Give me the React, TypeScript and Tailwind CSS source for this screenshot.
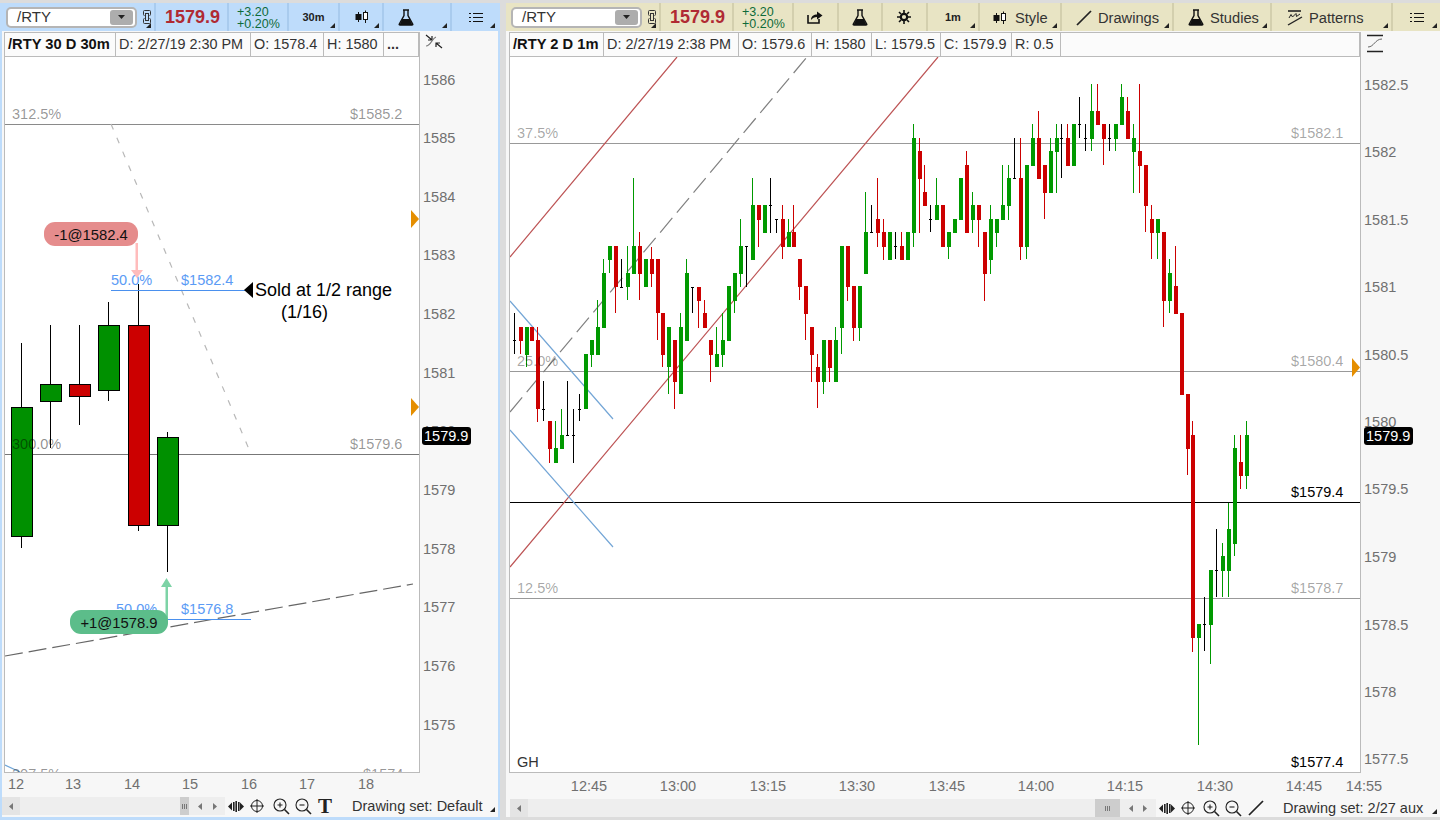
import React from "react";

type C = [string, number, number, number, number];
// type, wick top, wick bottom, body top (or tick), body bottom
const right: C[] = [
["k",313,354,340,340],["r",327,354,327,341],["g",327,367,327,355],["r",327,341,327,341],["r",327,422,340,409],
["k",381,421,409,409],["r",421,463,421,449],["g",421,463,448,463],["g",409,449,435,449],["k",381,435,435,435],
["k",409,463,435,435],["k",394,421,409,409],["g",354,409,354,409],["g",340,367,340,355],["g",300,355,327,355],
["g",259,328,273,328],["g",246,273,246,260],["r",246,313,246,287],["k",259,287,287,287],["g",246,300,273,287],
["g",178,274,246,274],["r",232,300,246,274],["g",259,287,259,287],["r",247,287,259,274],["r",259,340,259,313],
["r",313,367,313,355],["g",327,394,327,367],["r",340,409,340,382],["g",313,394,327,394],["g",259,341,273,341],
["k",287,313,287,287],["r",287,328,287,301],["r",300,328,313,328],["r",340,382,340,355],["g",327,367,354,367],
["g",313,367,340,355],["g",286,341,286,341],["g",273,313,273,301],["g",219,287,246,274],["k",246,287,246,246],
["g",178,260,205,260],["r",205,247,205,220],["g",205,233,205,233],["k",178,233,205,205],["k",219,233,219,219],
["r",205,259,219,247],["g",219,247,232,247],["r",205,247,232,247],["r",259,300,259,287],["r",286,340,286,314],
["r",327,382,327,355],["r",354,408,367,382],["g",340,394,340,382],["r",340,382,340,368],["g",327,382,340,382],
["g",246,354,246,328],["r",246,301,246,287],["r",286,341,286,328],["g",286,341,286,328],["g",192,274,232,274],
["k",205,232,232,232],["r",178,247,219,233],["r",219,260,232,247],["g",232,260,232,260],["k",232,259,246,246],
["r",232,260,246,260],["g",232,260,232,260],["g",124,247,138,233],["r",138,233,151,179],["r",165,206,192,206],
["k",205,232,219,219],["g",178,220,205,220],["r",205,247,205,247],["g",232,259,232,247],["g",219,233,219,233],
["g",178,220,178,220],["r",151,233,165,233],["g",192,233,205,220],["r",205,247,205,220],["r",232,301,232,274],
["g",205,274,219,260],["g",219,247,219,233],["g",165,220,205,220],["g",165,220,178,206],["k",138,178,178,178],
["r",138,260,178,247],["g",165,259,165,247],["g",124,166,138,166],["r",111,179,138,179],["r",165,219,165,193],
["g",138,193,151,193],["g",124,193,138,152],["k",124,178,138,138],["r",124,166,138,166],["g",124,166,124,166],
["k",97,138,124,124],["k",124,151,138,138],["g",84,151,111,139],["r",84,125,111,125],["r",124,165,124,139],
["k",124,151,138,138],["g",124,151,124,139],["g",84,125,97,125],["r",97,139,111,139],["g",124,193,138,152],
["r",84,193,151,166],["r",165,232,165,206],["r",205,259,219,233],["g",219,259,219,233],["r",232,327,232,301],
["g",259,313,273,301],["r",246,314,286,314],["r",313,395,313,395],["r",394,475,394,449],["r",421,652,435,638],
["g",624,745,624,638],["k",597,651,624,624],["g",570,664,570,625],["k",529,597,570,570],["g",543,597,556,571],
["g",503,597,529,571],["g",435,556,448,544],["r",435,489,462,476],["g",421,489,435,476],
];

const leftC = [
  { x: 11, c: "#009000", wt: 343, wb: 548, t: 407, b: 536 },
  { x: 40, c: "#009000", wt: 325, wb: 448, t: 384, b: 401 },
  { x: 69, c: "#cc0000", wt: 325, wb: 425, t: 384, b: 396 },
  { x: 98, c: "#009000", wt: 302, wb: 401, t: 325, b: 390 },
  { x: 128, c: "#cc0000", wt: 284, wb: 531, t: 325, b: 525 },
  { x: 157, c: "#009000", wt: 432, wb: 572, t: 437, b: 525 },
];

const Tri = () => (
  <svg width="5" height="5" viewBox="0 0 5 5" className="absolute right-[3px] bottom-[3px]">
    <path d="M5 0V5H0Z" fill="#222" />
  </svg>
);

const CandleIcon = () => (
  <svg width="14" height="14" viewBox="0 0 14 14" fill="none" stroke="#111" strokeWidth="1">
    <path d="M3.5 2V12M10.5 0.5V13" />
    <rect x="1" y="4.5" width="5" height="5" fill="#111" />
    <rect x="8.5" y="2.5" width="4" height="7" fill="#fff" />
  </svg>
);
const Flask = () => (
  <svg width="16" height="17" viewBox="0 0 16 17" fill="none">
    <path d="M5 1H11M6 1V6.5L1.2 15.2Q1 16 2 16H14Q15 16 14.8 15.2L10 6.5V1" stroke="#111" strokeWidth="1.4" />
    <path d="M4.2 10H11.8L14.5 16H1.5Z" fill="#111" />
  </svg>
);
const ListIcon = () => (
  <svg width="14" height="11" viewBox="0 0 14 11" fill="none" stroke="#111" strokeWidth="1">
    <path d="M0 1.5H2M4 1.5H14M0 5.5H2M4 5.5H14M0 9.5H2M4 9.5H14" />
  </svg>
);
const LinkIcon = () => (
  <svg width="8" height="14" viewBox="0 0 8 14" fill="none" stroke="#333" strokeWidth="1">
    <path d="M1.5 5.5Q0.5 5.5 0.5 4.5V1.5Q0.5 0.5 1.5 0.5H6.5Q7.5 0.5 7.5 1.5V4.5Q7.5 5.5 6.5 5.5" />
    <path d="M1.5 8.5Q0.5 8.5 0.5 9.5V12.5Q0.5 13.5 1.5 13.5H6.5Q7.5 13.5 7.5 12.5V9.5Q7.5 8.5 6.5 8.5" />
    <rect x="2.5" y="3.5" width="3" height="7" />
  </svg>
);
const ShareIcon = () => (
  <svg width="16" height="14" viewBox="0 0 16 14" fill="none">
    <path d="M1 5V13H12V9" stroke="#111" strokeWidth="1.6" />
    <path d="M4 10C4 6 7 4.5 10 4.5V1.5L15.5 5.5L10 9.5V7C7.5 7 5.5 8 4 10Z" fill="#111" />
  </svg>
);
const Gear = () => (
  <svg width="14" height="14" viewBox="0 0 14 14" fill="none" stroke="#111">
    <circle cx="7" cy="7" r="3.2" strokeWidth="2.2" />
    <path d="M7 0V3M7 11V14M0 7H3M11 7H14M2 2L4 4M10 10L12 12M2 12L4 10M10 4L12 2" strokeWidth="1.6" />
  </svg>
);
const LineIcon = () => (
  <svg width="16" height="16" viewBox="0 0 16 16" fill="none">
    <path d="M1 15L15 1" stroke="#222" strokeWidth="1.7" />
  </svg>
);
const PatternsIcon = () => (
  <svg width="16" height="16" viewBox="0 0 16 16" fill="none" stroke="#222">
    <path d="M1 1H14" strokeWidth="1.6" />
    <path d="M2 8L4 4.5L5.5 7L9 3.5L9.5 6.5L13 4" strokeWidth="1" />
    <path d="M1 15L15 7" strokeWidth="1.4" />
  </svg>
);
const Fit = () => (
  <svg width="16" height="11" viewBox="0 0 16 11" fill="#222">
    <path d="M0 5.5L4 1.5V9.5ZM16 5.5L12 1.5V9.5Z" />
    <rect x="5" y="1" width="1.6" height="9" />
    <rect x="7.4" y="0" width="1.6" height="11" />
    <rect x="10" y="1" width="1.6" height="9" />
  </svg>
);
const Cross = () => (
  <svg width="14" height="14" viewBox="0 0 14 14" fill="none" stroke="#222" strokeWidth="1">
    <circle cx="7" cy="7" r="5.5" />
    <path d="M7 0V14M0 7H14" />
  </svg>
);
const Zoom = ({ plus }: { plus?: boolean }) => (
  <svg width="17" height="17" viewBox="0 0 17 17" fill="none" stroke="#222" strokeWidth="1.1">
    <circle cx="7" cy="7" r="6" />
    <path d="M11.5 11.5L16 16" strokeWidth="1.6" />
    <path d={plus ? "M4.5 7H9.5M7 4.5V9.5" : "M4.5 7H9.5"} />
  </svg>
);
const Arrow = ({ dir, c = "#777" }: { dir: "l" | "r"; c?: string }) => (
  <svg width="4" height="7" viewBox="0 0 4 7">
    <path d={dir === "l" ? "M4 0V7L0 3.5Z" : "M0 0V7L4 3.5Z"} fill={c} />
  </svg>
);

const Combo = () => (
  <div className="flex items-center justify-between w-[131px] h-[21px] bg-white border-2 border-[#b5b5b5] rounded-[5px] pl-[9px] pr-[2px] text-[15px] text-[#333]">
    <span>/RTY</span>
    <span className="flex items-center justify-center w-[23px] h-[15px] rounded-[3px] bg-[#adadad]">
      <svg width="7" height="4" viewBox="0 0 7 4"><path d="M0 0H7L3.5 4Z" fill="#222" /></svg>
    </span>
  </div>
);

const Price = () => (
  <span className="font-bold text-[18px] text-[#b02a33]">1579.9</span>
);
const Change = () => (
  <div className="flex flex-col items-start pt-[2px] text-[12.5px] leading-[12px] text-[#0e6b3a]">
    <span>+3.20</span>
    <span>+0.20%</span>
  </div>
);

const Info = ({ items }: { items: { t: string; w: string; b?: boolean }[] }) => (
  <div className="flex h-[25px] border-t border-b border-[#bbbbbb] bg-[#fbfbfb] text-[14.4px] text-[#333]">
    {items.map((it) => (
      <div key={it.t} className={`${it.w} shrink-0 flex items-center pl-[3px] border-r border-[#bbbbbb] whitespace-nowrap ${it.b ? "font-bold text-[14.7px] text-[#111]" : ""}`}>
        {it.t}
      </div>
    ))}
  </div>
);

const Footer = ({ children }: { children: React.ReactNode }) => <div className="flex items-center h-[18px] text-[14.5px] text-[#333]">{children}</div>;

const AxisT = ({ x, y, t, anchor }: { x: number; y: number; t: string; anchor?: "start" | "middle" }) => (
  <text x={x} y={y} textAnchor={anchor || "start"} fontSize="14.5" fill="#707070">{t}</text>
);

const PriceTag = ({ x, y }: { x: number; y: number }) => (
  <g>
    <rect x={x} y={y} width="49" height="18" rx="3" fill="#000" />
    <text x={x + 2} y={y + 14} fontSize="14.5" fill="#fff">1579.9</text>
  </g>
);

function LeftPlot() {
  return (
    <svg width="414" height="715" viewBox="5 57 414 715" className="block bg-white">
      <path d="M5 124.5H419" stroke="#8a8a8a" />
      <path d="M5 454.5H419" stroke="#777" />
      <path d="M111 124L251 454" stroke="#b8b8b8" strokeWidth="1.2" strokeDasharray="6 9" />
      <path d="M5 656L413 584" stroke="#666" strokeWidth="1.2" strokeDasharray="18 6" />
      <path d="M5 765L20 772" stroke="#6fa5d8" strokeWidth="1.2" />
      {leftC.map((c) => (
        <g key={c.x} shapeRendering="crispEdges">
          <rect x={c.x + 10} y={c.wt} width="1" height={c.wb - c.wt} fill="#000" />
          <rect x={c.x + 0.5} y={c.t + 0.5} width="21" height={c.b - c.t} fill={c.c} stroke="#000" />
        </g>
      ))}
      <g fontSize="14.5">
        <text x="12" y="119" fill="#000" fillOpacity="0.42">312.5%</text>
        <text x="350" y="119" fill="#000" fillOpacity="0.42">$1585.2</text>
        <text x="12" y="449" fill="#000" fillOpacity="0.45">300.0%</text>
        <text x="350" y="449" fill="#000" fillOpacity="0.42">$1579.6</text>
        <text x="12" y="779" fill="#000" fillOpacity="0.42">207.5%</text>
        <text x="363" y="779" fill="#000" fillOpacity="0.42">$1574</text>
        <text x="111" y="285" fill="#5b9bf5">50.0%</text>
        <text x="181" y="285" fill="#5b9bf5">$1582.4</text>
        <text x="116" y="614" fill="#5b9bf5">50.0%</text>
        <text x="181" y="614" fill="#5b9bf5">$1576.8</text>
      </g>
      <path d="M111 290.5H245" stroke="#4a90ee" />
      <path d="M167 619.5H251" stroke="#4a90ee" />
      <path d="M253 282V298L244 290Z" fill="#000" />
      <text x="255" y="295.5" fontSize="18" fill="#000">Sold at 1/2 range</text>
      <text x="281" y="317.5" fontSize="18" fill="#000">(1/16)</text>
      <path d="M135.5 243H138V270H143L137 278L131 270H135.5Z" fill="#ffbcbc" />
      <rect x="44" y="222" width="94" height="24" rx="11" fill="#e58c8c" />
      <text x="91" y="239.5" fontSize="14.8" textAnchor="middle" fill="#111">-1@1582.4</text>
      <path d="M165.5 620V587H161L166.5 578L172 587H168V620Z" fill="#7dd3a6" />
      <rect x="70" y="610" width="98" height="24" rx="11" fill="#5cbd8a" />
      <text x="119" y="627.5" fontSize="14.8" textAnchor="middle" fill="#111">+1@1578.9</text>
      <path d="M411 210L419 219L411 228Z" fill="#e58e00" />
      <path d="M411 398L419 407L411 416Z" fill="#e58e00" />
    </svg>
  );
}

function RightPlot() {
  return (
    <svg width="850" height="715" viewBox="510 57 850 715" className="block bg-white">
      <path d="M510 143.5H1360M510 371.5H1360M510 598.5H1360" stroke="#999" />
      <path d="M510 502.5H1360" stroke="#000" />
      <path d="M510 257L677 57M510 567L938 57" stroke="#bd5455" strokeWidth="1.2" />
      <path d="M510 412L807 57" stroke="#808080" strokeWidth="1.2" strokeDasharray="19 7" />
      <path d="M510 301L613 419M510 430L613 547" stroke="#74a6d6" strokeWidth="1.2" />
      {right.map((c, i) => {
        const x = Math.round(513.6 + 5.955 * i);
        const col = c[0] === "g" ? "#009900" : c[0] === "r" ? "#cc0000" : "#000";
        return (
          <g key={i} shapeRendering="crispEdges" fill={col}>
            <rect x={x} y={c[1]} width="1" height={c[2] - c[1]} />
            {c[0] === "k" ? (
              <rect x={x - 1} y={c[3]} width="3" height="1" />
            ) : (
              <rect x={x - 1} y={c[3]} width="4" height={Math.max(c[4] - c[3], 1)} />
            )}
          </g>
        );
      })}
      <g fontSize="14.5" fill="#000" fillOpacity="0.36">
        <text x="517" y="138">37.5%</text>
        <text x="1291" y="138">$1582.1</text>
        <text x="517" y="366">25.0%</text>
        <text x="1291" y="366">$1580.4</text>
        <text x="517" y="593">12.5%</text>
        <text x="1291" y="593">$1578.7</text>
      </g>
      <text x="1291" y="497" fontSize="14.5" fill="#000">$1579.4</text>
      <text x="1291" y="767" fontSize="14.5" fill="#000">$1577.4</text>
      <text x="517" y="767" fontSize="14.5" fill="#333">GH</text>
      <path d="M1352 358L1360 367.5L1352 377Z" fill="#e58e00" />
    </svg>
  );
}

const leftTicks: [string, number][] = [["1586",85],["1585",143],["1584",202],["1583",260],["1582",319],["1581",378],["1580",436],["1579",495],["1578",554],["1577",612],["1576",671],["1575",730]];
const rightTicks: [string, number][] = [["1582.5",90],["1582",157],["1581.5",225],["1581",292],["1580.5",360],["1580",427],["1579.5",494],["1579",562],["1578.5",630],["1578",697],["1577.5",764]];

export default function App() {
  return (
    <div className="flex w-[1440px] h-[820px] overflow-hidden bg-[#dcdcdc] [font-family:'Liberation_Sans',Arial,sans-serif]">
      {/* LEFT PANEL */}
      <div className="flex flex-col w-[500px] shrink-0 mt-[3px] border-x-2 border-b-[3px] border-[#bedcfb] bg-[#f7f7f7]">
        <div className="flex h-[28px] shrink-0 bg-[#bedcfb]">
          <div className="relative w-[154px] flex items-center pl-[4px] gap-[6px] border-r-2 border-[#a9cbee]">
            <Combo />
            <LinkIcon />
            <Tri />
          </div>
          <div className="w-[73px] flex items-center pl-[9px] border-r-2 border-[#a9cbee]"><Price /></div>
          <div className="w-[60px] flex items-center pl-[8px] border-r-2 border-[#a9cbee]"><Change /></div>
          <div className="relative w-[51px] flex items-center justify-center border-r-2 border-[#a9cbee] text-[11px] font-bold text-[#222]">30m<Tri /></div>
          <div className="relative w-[44px] flex items-center pl-[15px] border-r-2 border-[#a9cbee]"><CandleIcon /><Tri /></div>
          <div className="relative w-[68px] flex items-center pl-[14px] border-r-2 border-[#a9cbee]"><Flask /><Tri /></div>
          <div className="relative flex-1 flex items-center pl-[17px]"><ListIcon /><Tri /></div>
        </div>
        <div className="flex flex-1 mt-[1px] pl-[2px]">
          <div className="flex flex-col w-[416px] border-l border-r border-b border-[#bbbbbb] h-[741px]">
            <Info items={[
              { t: "/RTY 30 D 30m", w: "w-[111px]", b: true },
              { t: "D: 2/27/19 2:30 PM", w: "w-[135px]" },
              { t: "O: 1578.4", w: "w-[73px]" },
              { t: "H: 1580", w: "w-[60px]" },
              { t: "...", w: "flex-1 font-bold" },
            ]} />
            <LeftPlot />
          </div>
          <svg width="78" height="741" viewBox="420 32 78 741" className="block">
            {leftTicks.map(([t, y]) => <AxisT key={t} x={423} y={y} t={t} />)}
            <PriceTag x={422} y={427} />
            <g fill="none" stroke="#222" strokeWidth="1.2">
              <path d="M426 35L432 40M432 36V40H428M442 48L436 43M436 47V43H440" />
              <path d="M426 46C431 46 432 38 436 37" stroke="#777" />
            </g>
          </svg>
        </div>
        <svg width="496" height="24" viewBox="2 773 496 24" className="block shrink-0">
          {[["12",16],["13",73],["14",132],["15",190],["16",249],["17",307],["18",366]].map(([t, x]) => (
            <AxisT key={t as string} x={x as number} y={789} t={t as string} anchor="middle" />
          ))}
        </svg>
        <Footer>
          <div className="flex items-center w-[223px] h-[18px] bg-[#eeeeee] shrink-0">
            <div className="flex items-center justify-center w-[18px] h-full bg-[#e4e4e4]"><Arrow dir="l" /></div>
            <div className="w-[160px]" />
            <div className="w-[9px] h-full bg-[#cdcdcd] flex items-center justify-center gap-[1px]">
              <i className="w-[1px] h-[5px] bg-[#777]" /><i className="w-[1px] h-[5px] bg-[#777]" /><i className="w-[1px] h-[5px] bg-[#777]" />
            </div>
            <div className="flex flex-1 items-center justify-around px-[3px]"><Arrow dir="l" /><Arrow dir="r" /></div>
          </div>
          <div className="ml-[3px]"><Fit /></div>
          <div className="ml-[6px]"><Cross /></div>
          <div className="ml-[9px]"><Zoom plus /></div>
          <div className="ml-[5px]"><Zoom /></div>
          <span className="ml-[6px] font-bold text-[21px] leading-none text-[#222] [font-family:'Liberation_Serif',serif]">T</span>
          <span className="ml-[20px] pt-[1px] whitespace-nowrap">Drawing set: Default</span>
          <div className="relative flex-1 h-full"><Tri /></div>
        </Footer>
        <div className="h-[2px] shrink-0" />
      </div>

      {/* RIGHT PANEL */}
      <div className="flex flex-col w-[934px] ml-[6px] shrink-0 mt-[3px] mb-[3px] bg-[#f7f7f7]">
        <div className="flex h-[28px] shrink-0 bg-[#e8e4c4]">
          <div className="relative w-[155px] flex items-center pl-[5px] gap-[6px] border-r-2 border-[#d3cfae]">
            <Combo />
            <LinkIcon />
            <Tri />
          </div>
          <div className="w-[73px] flex items-center pl-[9px] border-r-2 border-[#d3cfae]"><Price /></div>
          <div className="w-[60px] flex items-center pl-[8px] border-r-2 border-[#d3cfae]"><Change /></div>
          <div className="w-[45px] flex items-center pl-[13px] border-r-2 border-[#d3cfae]"><ShareIcon /></div>
          <div className="w-[44px] flex items-center pl-[13px] border-r-2 border-[#d3cfae]"><Flask /></div>
          <div className="w-[45px] flex items-center pl-[14px] border-r-2 border-[#d3cfae]"><Gear /></div>
          <div className="relative w-[52px] flex items-center pl-[17px] border-r-2 border-[#d3cfae] text-[11px] font-bold text-[#222]">1m<Tri /></div>
          <div className="relative w-[82px] flex items-center pt-[1px] pl-[13px] gap-[8px] border-r-2 border-[#d3cfae] text-[14.67px] text-[#333]"><CandleIcon />Style<Tri /></div>
          <div className="relative w-[112px] flex items-center pt-[1px] pl-[14px] gap-[6px] border-r-2 border-[#d3cfae] text-[14.67px] text-[#333]"><LineIcon />Drawings<Tri /></div>
          <div className="relative w-[98px] flex items-center pt-[1px] pl-[14px] gap-[6px] border-r-2 border-[#d3cfae] text-[14.67px] text-[#333]"><Flask />Studies<Tri /></div>
          <div className="relative w-[121px] flex items-center pt-[1px] pl-[15px] gap-[6px] border-r-2 border-[#d3cfae] text-[14.67px] text-[#333]"><PatternsIcon />Patterns<Tri /></div>
          <div className="relative flex-1 flex items-center pl-[17px]"><ListIcon /><Tri /></div>
        </div>
        <div className="flex flex-1 mt-[1px] pl-[3px]">
          <div className="flex flex-col w-[852px] border-l border-r border-b border-[#bbbbbb] h-[741px]">
            <Info items={[
              { t: "/RTY 2 D 1m", w: "w-[94px]", b: true },
              { t: "D: 2/27/19 2:38 PM", w: "w-[135px]" },
              { t: "O: 1579.6", w: "w-[73px]" },
              { t: "H: 1580", w: "w-[60px]" },
              { t: "L: 1579.5", w: "w-[69px]" },
              { t: "C: 1579.9", w: "w-[71px]" },
              { t: "R: 0.5", w: "w-[49px]" },
              { t: " ", w: "flex-1" },
            ]} />
            <RightPlot />
          </div>
          <svg width="79" height="741" viewBox="1361 32 79 741" className="block">
            {rightTicks.map(([t, y]) => <AxisT key={t} x={1364} y={y} t={t} />)}
            <PriceTag x={1364} y={427} />
            <g fill="none" stroke="#222">
              <path d="M1367 35.5H1383M1367 51.5H1383" strokeWidth="1.6" />
              <path d="M1368 47C1374 47 1375 39 1382 39" stroke="#666" />
            </g>
          </svg>
        </div>
        <svg width="934" height="24" viewBox="506 773 934 24" className="block shrink-0">
          {[["12:45",589],["13:00",678],["13:15",768],["13:30",857],["13:45",947],["14:00",1036],["14:15",1125],["14:30",1215],["14:45",1304],["14:55",1364]].map(([t, x]) => (
            <AxisT key={t as string} x={x as number} y={789} t={t as string} anchor="middle" />
          ))}
        </svg>
        <Footer>
          <div className="flex items-center w-[646px] ml-[4px] h-[18px] bg-[#eeeeee] shrink-0">
            <div className="flex items-center justify-center w-[18px] h-full bg-[#e4e4e4]"><Arrow dir="l" /></div>
            <div className="w-[567px]" />
            <div className="w-[25px] h-full bg-[#cdcdcd] flex items-center justify-center gap-[1px]">
              <i className="w-[1px] h-[5px] bg-[#777]" /><i className="w-[1px] h-[5px] bg-[#777]" /><i className="w-[1px] h-[5px] bg-[#777]" />
            </div>
            <div className="flex flex-1 items-center justify-around px-[4px]"><Arrow dir="l" /><Arrow dir="r" /></div>
          </div>
          <div className="ml-[3px]"><Fit /></div>
          <div className="ml-[6px]"><Cross /></div>
          <div className="ml-[8px]"><Zoom plus /></div>
          <div className="ml-[5px]"><Zoom /></div>
          <div className="ml-[6px]"><LineIcon /></div>
          <span className="ml-[19px] pt-[1px] whitespace-nowrap">Drawing set: 2/27 aux</span>
          <div className="relative flex-1 h-full"><Tri /></div>
        </Footer>
      </div>
    </div>
  );
}
